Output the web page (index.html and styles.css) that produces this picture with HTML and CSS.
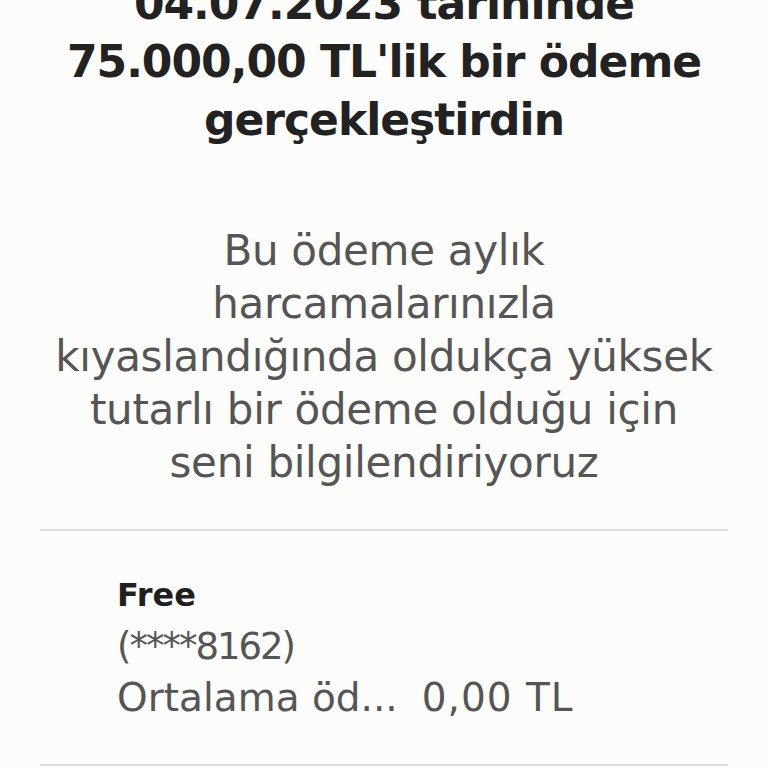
FILE: index.html
```html
<!DOCTYPE html>
<html lang="tr">

<head>
    <meta charset="UTF-8">
    <meta name="viewport" content="width=device-width, initial-scale=1.0">
    <title>Ödeme bildirimi</title>
    <link rel="stylesheet" href="styles.css">
</head>

<body>
    <div class="page">
        <h1 class="title">04.07.2023 tarihinde<br>75.000,00 TL'lik bir ödeme<br>gerçekleştirdin</h1>
        <p class="desc">Bu ödeme aylık<br>harcamalarınızla<br>kıyaslandığında oldukça yüksek<br>tutarlı bir ödeme olduğu için<br>seni bilgilendiriyoruz</p>
        <div class="card">
            <div class="card-name">Free</div>
            <div class="card-no">(****8162)</div>
            <div class="card-row">
                <span class="card-label">Ortalama öd...</span>
                <span class="card-value">0,00 TL</span>
            </div>
        </div>
    </div>
</body>

</html>
```

FILE: styles.css
```css
* {
    margin: 0;
    padding: 0;
    box-sizing: border-box;
}

body {
    background: #fcfcfa;
    font-family: "DejaVu Sans", sans-serif;
    overflow: hidden;
}

.page {
    margin-top: -25px;
    padding: 0 40px;
}

.title {
    font-size: 44px;
    line-height: 58px;
    font-weight: 700;
    color: #222;
    text-align: center;
    letter-spacing: -1px;
}

.desc {
    margin-top: 75px;
    font-size: 42px;
    line-height: 53px;
    color: #555;
    text-align: center;
    letter-spacing: -0.3px;
}

.card {
    margin-top: 40px;
    padding: 39px 0 41px 77px;
    border-top: 2px solid #dcdcdc;
    border-bottom: 2px solid #dcdcdc;
    font-size: 37px;
    line-height: 51px;
    color: #555;
}

.card-name {
    font-weight: 700;
    font-size: 32px;
    color: #1f1f1f;
}

.card-no {
    letter-spacing: -2px;
}

.card-row {
    display: flex;
    gap: 24px;
    font-size: 39px;
}

.card-value {
    letter-spacing: 1px;
}
```
